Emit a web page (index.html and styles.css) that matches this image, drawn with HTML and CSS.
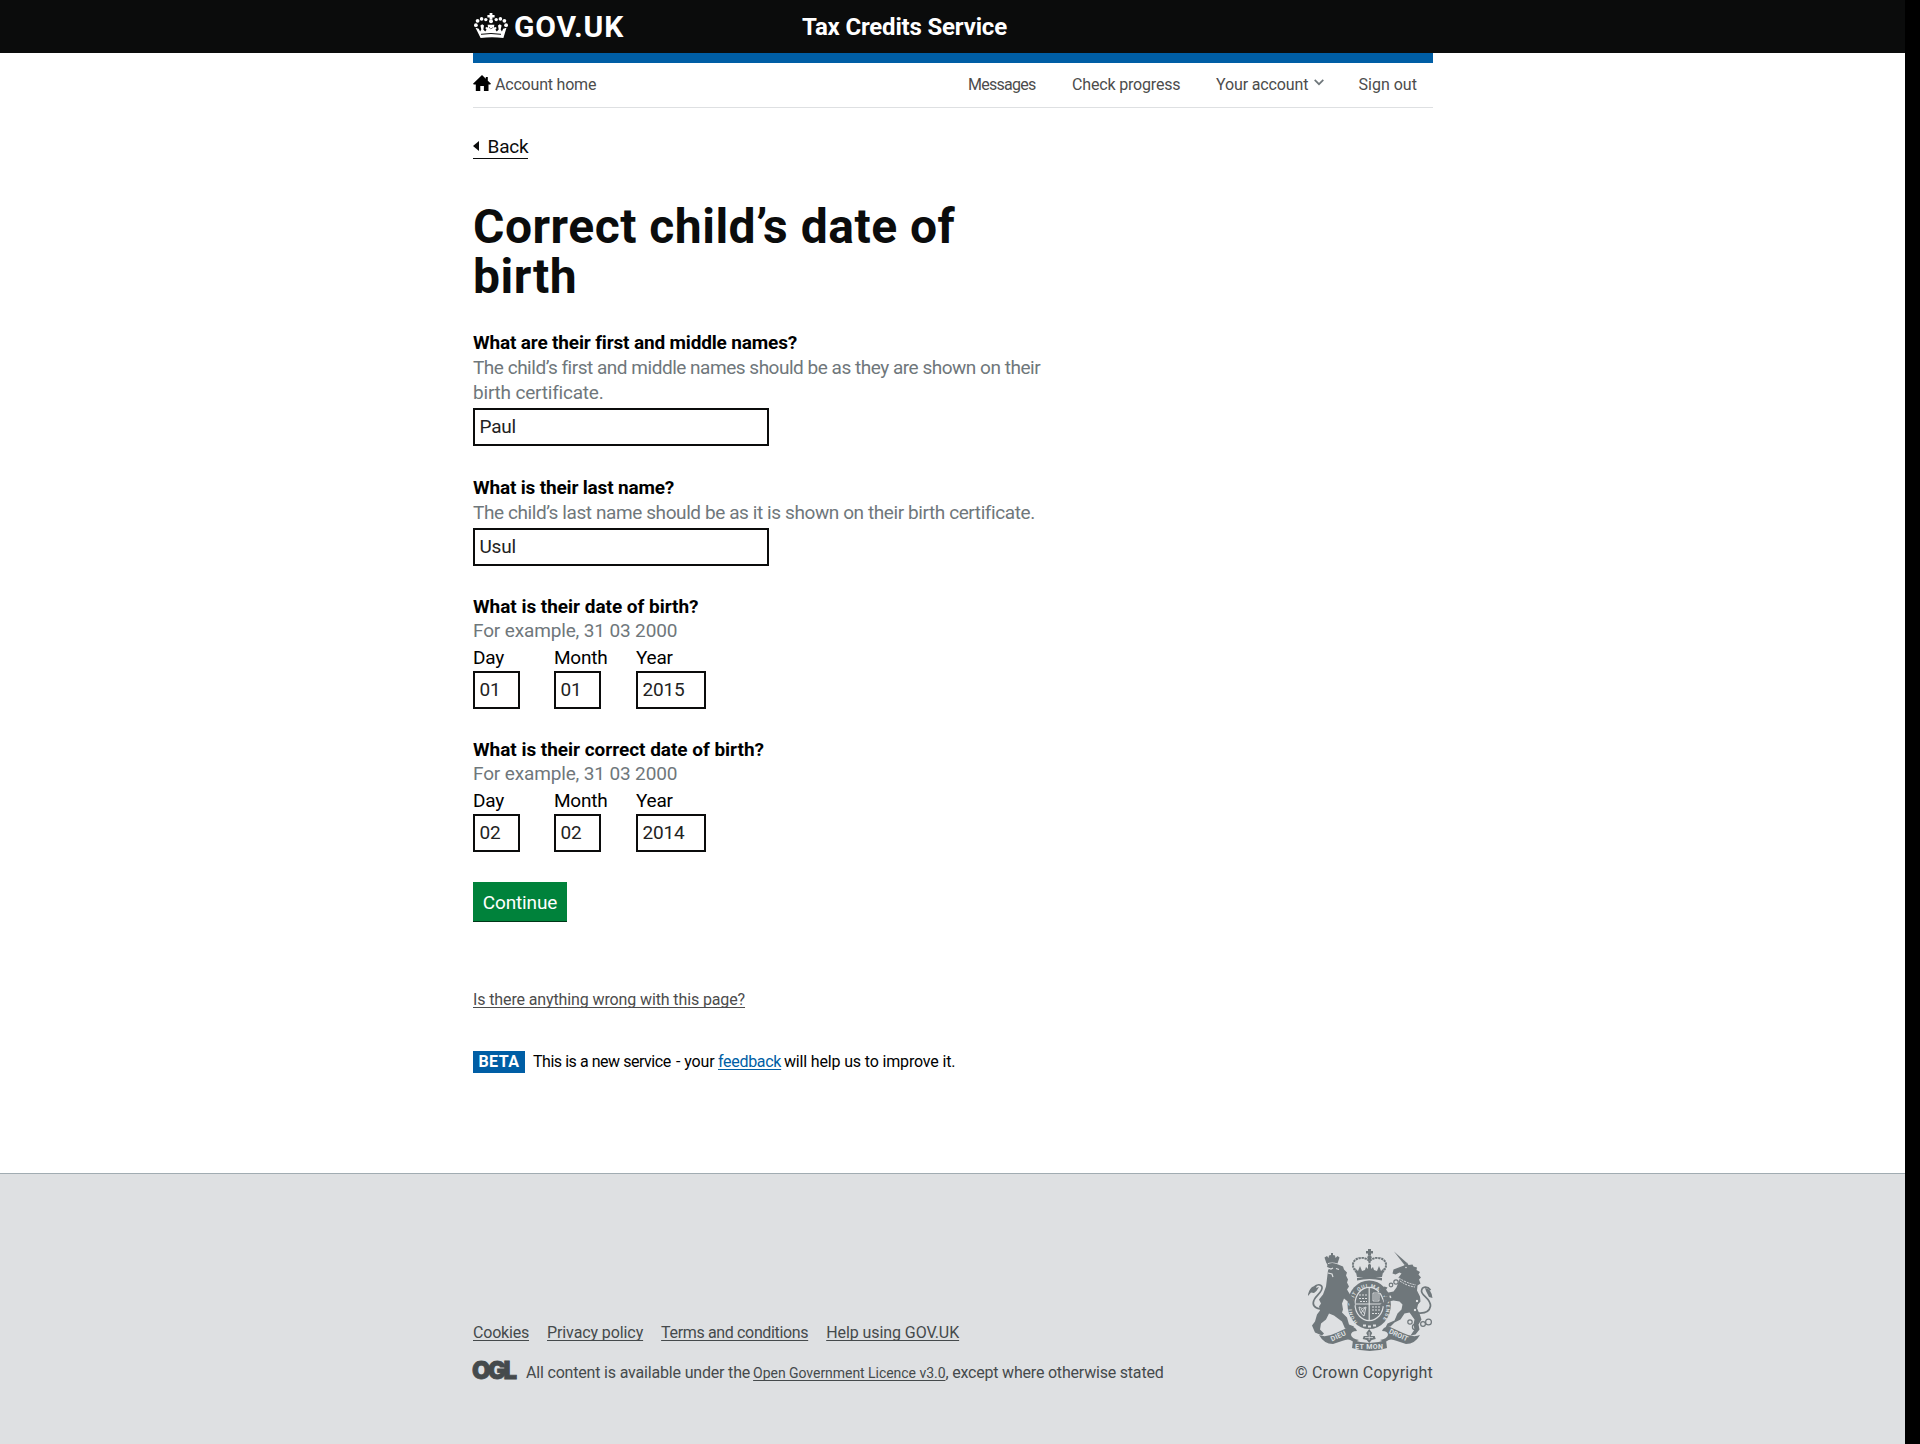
FILE: index.html
```html
<!DOCTYPE html>
<html lang="en">
<head>
<meta charset="utf-8">
<title>Correct child’s date of birth - Tax Credits Service</title>
<link rel="stylesheet" href="styles.css">
</head>
<body>
<header class="header">
  <div class="wrap header-inner">
    <a class="logo">
      <svg class="crown" width="34" height="25" viewBox="0 0 34 25" fill="#fff">
        <path d="M15.600 0h2.800v2h2.200v2.600h-2.200v2h-2.800v-2h-2.200V2h2.200z"/>
        <circle cx="17" cy="8.200" r="2"/>
        <circle cx="11.800" cy="6.600" r="1.700"/><circle cx="22.200" cy="6.600" r="1.700"/>
        <circle cx="7.600" cy="5.900" r="1.800"/><circle cx="26.400" cy="5.900" r="1.800"/>
        <circle cx="3.600" cy="7.800" r="1.900"/><circle cx="30.400" cy="7.800" r="1.900"/>
        <circle cx="1.900" cy="12.200" r="1.900"/><circle cx="32.100" cy="12.200" r="1.900"/>
        <path d="M1.500 14.800l3.300 1 1.300 2.700 1.200-1.900-.9-4 1.800-1.300 1.800 1.300-.7 4 1.900 1.800 1.400-1.700-1.100-1.200.4-1.600 2.200.5-.5-2.700h6.800l-.5 2.700 2.200-.5.4 1.600-1.100 1.200 1.400 1.700 1.900-1.800-.7-4 1.800-1.300 1.800 1.300-.9 4 1.200 1.900 1.300-2.700 3.300-1-3.100 10.200q-11.400-1.500-22.800 0z"/>
        <path d="M7 21.300q10-1.600 20 0M15.300 14.500l1.200 1.200M18.700 14.500l-1.200 1.200" stroke="#0b0c0c" fill="none"/>
      </svg>
      <span class="logo-name">GOV.UK</span>
    </a>
    <span class="service">Tax Credits Service</span>
  </div>
</header>

<div class="wrap">
  <nav class="account">
    <a class="home">
      <svg width="18" height="16" viewBox="0 0 18 16"><path d="M9 0l3.800 3.700V2h2v3.700L18 8.700l-.8.800h-1.700V16h-4.600v-5H7.300v5H2.800V9.500H.8L0 8.700z" fill="#000"/></svg>
      <span>Account home</span>
    </a>
    <a class="messages">Messages</a>
    <a class="progress">Check progress</a>
    <a class="menu"><span>Your account</span><svg width="10" height="7" viewBox="0 0 10 7"><path d="M.7.900L5 5.200 9.300.900" fill="none" stroke="#6f777b" stroke-width="1.700"/></svg></a>
    <a class="signout">Sign out</a>
  </nav>

  <main class="content">
    <a class="back"><svg width="6" height="10" viewBox="0 0 6 10"><path d="M6 0v10L0 5z" fill="#0b0c0c"/></svg><span>Back</span></a>
    <h1>Correct child’s date of<br>birth</h1>

    <form>
      <div class="field">
        <label class="question q-first">What are their first and middle names?</label>
        <p class="hint hint-first">The child’s first and middle names should be as they are shown on their<br><span>birth certificate.</span></p>
        <input class="input" type="text" value="Paul">
      </div>
      <div class="field">
        <label class="question q-last">What is their last name?</label>
        <p class="hint hint-last">The child’s last name should be as it is shown on their birth certificate.</p>
        <input class="input" type="text" value="Usul">
      </div>
      <div class="field date">
        <label class="question">What is their date of birth?</label>
        <p class="hint">For example, 31 03 2000</p>
        <div class="parts">
          <label>Day<input class="input" type="text" value="01"></label>
          <label>Month<input class="input" type="text" value="01"></label>
          <label>Year<input class="input year" type="text" value="2015"></label>
        </div>
      </div>
      <div class="field date">
        <label class="question">What is their correct date of birth?</label>
        <p class="hint">For example, 31 03 2000</p>
        <div class="parts">
          <label>Day<input class="input" type="text" value="02"></label>
          <label>Month<input class="input" type="text" value="02"></label>
          <label>Year<input class="input year" type="text" value="2014"></label>
        </div>
      </div>
      <button class="button" type="button">Continue</button>
    </form>

    <div class="report"><a>Is there anything wrong with this page?</a></div>
    <div class="phase">
      <strong>BETA</strong>
      <span class="phase-intro">This is a new service</span>
      <span class="phase-your">- your</span>
      <a>feedback</a>
      <span class="phase-end">will help us to improve it.</span>
    </div>
  </main>
</div>

<footer class="footer">
  <div class="wrap footer-inner">
    <div class="meta">
      <div class="links">
        <a class="cookies">Cookies</a>
        <a class="privacy">Privacy policy</a>
        <a class="terms">Terms and conditions</a>
        <a class="help">Help using GOV.UK</a>
      </div>
      <div class="licence">
        <svg class="ogl" width="43" height="18" viewBox="0 0 43 18"><text x="-1" y="17.400" textLength="45" lengthAdjust="spacing">OGL</text></svg>
        <span class="lic-a">All content is available under the</span>
        <a>Open Government Licence v3.0</a><span class="lic-b">, except where otherwise stated</span>
      </div>
    </div>
    <div class="copyright">
      <svg class="arms" width="125" height="103" viewBox="0 0 125 103" fill="#6f777b">
        <defs><path id="garter" d="M49.500 73A17.200 19.800 0 1 1 73.500 72"/></defs>
        <!-- royal crown -->
        <path d="M60 0h3v2h2v2.500h-2v2h-3v-2h-2V2h2z"/><circle cx="61.500" cy="8.500" r="2.200"/>
        <path d="M61 12c-4-5-15-4-16 3-.5 4 2 6 4 9M62 12c4-5 15-4 16 3 .5 4-2 6-4 9M61.500 9v13" fill="none" stroke="#6f777b" stroke-width="2" stroke-dasharray="2.300 .7"/>
        <path d="M47 19l3 3 2-5 2 5 3-1 1-3 2 2v-4h3v4l2-2 1 3 3 1 2-5 2 5 3-3-2 9H49z"/>
        <path d="M49 29q12.500-3 25 0v2.500q-12.500-3-25 0z"/>
        <!-- garter and shield -->
        <ellipse cx="61.200" cy="55.800" rx="21.700" ry="24.300"/>
        <ellipse cx="61.200" cy="55" rx="14.800" ry="17.200" fill="#dee0e2"/>
        <ellipse cx="61.200" cy="55" rx="13.600" ry="16"/>
        <path d="M61.200 39v32M47.600 55h27" stroke="#dee0e2" stroke-width="1.200"/>
        <path d="M51 46h8M51 49.500h8M52 52.500h7M64 61h8M64 64.500h7M64 58h9" stroke="#dee0e2" stroke-dasharray="2 1"/>
        <path d="M65 44h6v8h-6zM67 45v6M69 45v6M51 58q3 3 7 0l-2 9q-4-2-5-9M53 60l4 5M57 59l-4 5" fill="none" stroke="#dee0e2" stroke-width=".9"/>
        <text class="motto garter"><textPath href="#garter" textLength="86">HONI SOIT QUI MAL Y PENSE</textPath></text>
        <path d="M55 76.500h3M60 77.500h3M65 76.500h3" stroke="#dee0e2" stroke-width="2"/>
        <!-- lion -->
        <path d="M18.500 14.500l-2-6 2.500-1.500 1.500 2 .5-2.500 2-.5V4h2v2l2 .5.500 2.500 2-2 2 1.500-2 6q-5-2-11 0z"/>
        <path d="M19 15.500q5-3 11 0l5 2 1 3 3 3-1 3 2 4-1 3 2 4-2 3 3 5 3 4 2 6-2 3-3-1-1-4-5-4-2 5 1 6-1 3 5 5 2 7 5 2-2 3-7-1-3-7-8-6-5-2-3 6-5 4-1 6 4 4-2 2-7-3-3-7 3-4 2-7 3-4-1-4 2-3-2-4 4-5 3-8 1-8 1-8 1-2-2-2 1-3-1-3z"/>
        <path d="M20 19l3 1 2-1M20 24l4 1 1 3M28 19.500l3 1" fill="none" stroke="#dee0e2" stroke-width="1.200"/>
        <path d="M12 60Q3 58 6 51c2-5 9-8 8-13-1-3-5-3-8 0" fill="none" stroke="#6f777b" stroke-width="1.700"/>
        <path d="M0 47q0-5 4-9l5-1.500-1 2.500 3-1q-2 4-5 6l-3-.5z"/>
        <!-- unicorn -->
        <path d="M86 2.500L99 14l-2.500 2z"/>
        <path d="M96 16.500l3-3 1.500 2.500 4-.5 1 2 3.500 1-.5 2.500 3.500 2-1.500 2.500 2.500 3-2 2 1.500 4-3 2-.5 5 3 6 .5 5-2.500 3-1 4 2.500 5 2 6-3 5 1 5-4 5-5 1 4-6-1-5 1-5-5-7-5 1-4 6-6 3-4 4-5 1 2-4 7-3 3-7 4-4 1-5-3-3-6-1-5 1-4 5-5-1 2-2-2-5 3 1 1 3 4-3 4-2-1-2-5 1-3-3-4-1 2-3 4-3 3 1-2 3 3 2 5-1 3-4 3-8-1-2 3-4-2-1-4 2-3-1 1-4z"/>
        <path d="M91 29q7 5 17 7M92 32q7 5 15 6" fill="none" stroke="#dee0e2" stroke-width="1" stroke-dasharray="2 1"/>
        <circle cx="98" cy="18.500" r=".8" fill="#dee0e2"/>
        <path d="M110 64q11 1 12.500-7c0-8-9-10-9-15 .5-5 6-5 9-1" fill="none" stroke="#6f777b" stroke-width="1.700"/>
        <path d="M117 39q6 0 7.500 10l-3.500-1-3-6z"/>
        <g fill="none" stroke="#6f777b" stroke-width="1.200"><circle cx="88" cy="33" r="2.200"/><circle cx="83" cy="36" r="1.800"/><circle cx="102" cy="73" r="2.200"/><circle cx="107" cy="78" r="2.600"/><circle cx="115" cy="75" r="2.400"/><circle cx="120.500" cy="73" r="2.900"/><circle cx="109" cy="52" r="1.800" fill="#dee0e2"/><circle cx="107" cy="61" r="1.800" fill="#dee0e2"/></g>
        <!-- scroll -->
        <path d="M11 86q7 3 17-2l13-6q6-1 8 4-6 0-6 4 1 4 8 5-5 3-7 1-3-3-10 0l-9 3q-9 0-14-9z"/>
        <path d="M112 86q-7 3-17-2l-13-6q-6-1-8 4 6 0 6 4-1 4-8 5 5 3 7 1 3-3 10 0l9 3q9 0 14-9z"/>
        <path d="M45 91q16 6 33 0l1 8q-17 6-35 0z"/>
        <path d="M61.200 80l3 4-1.500 3h4l1 3-4 1-2.500 3-2.500-3-4-1 1-3h4l-1.500-3z"/>
        <path d="M61.200 83v8M57 88.500h8" stroke="#dee0e2" stroke-width=".7"/>
        <text class="motto" x="47" y="100" textLength="28">ET MON</text>
        <text class="motto" transform="translate(24 92.500) rotate(-25)" textLength="16">DIEU</text>
        <text class="motto" transform="translate(80.500 84) rotate(25)" textLength="20">DROIT</text>
      </svg>
      <span>© Crown Copyright</span>
    </div>
  </div>
</footer>
</body>
</html>
```
FILE: styles.css
```css
* { box-sizing: border-box; }
html { background: #000; }
body {
  display: flex;
  flex-direction: column;
  width: 1905px;
  height: 1444px;
  margin: 0;
  background: #fff;
  color: #0b0c0c;
  font: 16px/20px Roboto, "Liberation Sans", sans-serif;
}
.wrap { width: 960px; margin: 0 auto 0 473px; }
p, h1 { margin: 0; }

.header { height: 53px; background: #0b0c0c; color: #fff; }
.header-inner { display: flex; }
.logo { display: flex; width: 329px; padding: 13px 0 0 1px; }
.crown { flex: none; margin-left: -.5px; }
.logo-name { margin: -4px 0 0 6.500px; font-size: 30px; line-height: 35px; font-weight: 700; letter-spacing: .9px; }
.service { padding-top: 13px; font-size: 24px; line-height: 29px; font-weight: 700; letter-spacing: -.18px; }

.account {
  display: flex;
  height: 55px;
  border-top: 10px solid #005ea5;
  border-bottom: 1px solid #dee0e2;
  padding-top: 12px;
  color: #4c4c4c;
}
.home { display: flex; width: 495px; letter-spacing: -.2px; }
.home svg { margin-top: -.5px; }
.home span { margin-left: 4px; }
.messages { width: 104px; letter-spacing: -.72px; }
.progress { width: 144px; letter-spacing: -.17px; }
.menu { width: 142.500px; letter-spacing: -.14px; }
.menu svg { margin: 0 0 4px 6px; }

.content { display: flex; flex-direction: column; align-items: flex-start; }
.back {
  display: flex;
  align-items: center;
  height: 24px;
  margin: 27px 0 43px;
  border-bottom: 1px solid #0b0c0c;
  font-size: 19px;
  line-height: 25px;
  letter-spacing: -.2px;
}
.back svg { margin-bottom: 1px; }
.back span { margin-left: 8.500px; }
h1 { font-size: 48px; line-height: 50px; font-weight: 700; letter-spacing: .5px; margin-bottom: 28px; padding-top: 0; }

.field { margin-bottom: 29px; font-size: 19px; line-height: 25px; }
.question { display: block; font-weight: 700; letter-spacing: -.03px; color: #000; }
.q-first { letter-spacing: -.16px; }
.q-last { letter-spacing: -.17px; }
.hint { color: #6f777b; letter-spacing: -.14px; }
.hint-first { letter-spacing: -.48px; }
.hint-first span { letter-spacing: -.2px; }
.hint-last { letter-spacing: -.41px; }
.input {
  display: block;
  width: 296px;
  height: 38px;
  margin: 3px 0 0;
  padding: 3px 5px 5px 4.500px;
  border: 2px solid #0b0c0c;
  border-radius: 0;
  background: #fff;
  color: #222;
  font: 19px/25px Roboto, "Liberation Sans", sans-serif;
  letter-spacing: -.2px;
}
.date .question { padding-top: 1px; line-height: 22px; }
.parts { display: grid; grid-template-columns: 81px 82px 70px; margin-top: 2px; color: #000; letter-spacing: -.25px; }
.parts .input { width: 47px; margin-top: 1px; }
.parts .year { width: 70px; }
.button {
  display: block;
  width: 94px;
  height: 39px;
  margin-top: 30px;
  padding: 1px 0 0;
  border: 0;
  background: #00823b;
  box-shadow: 0 1px 0 #003618;
  color: #fff;
  font: 19px/25px Roboto, "Liberation Sans", sans-serif;
  letter-spacing: -.15px;
}
.report a, .phase a, .links a, .licence a { text-decoration: underline 1px; text-decoration-skip-ink: none; text-underline-offset: 2px; }
.report { margin-top: 69px; color: #4c4c4c; letter-spacing: -.12px; }
.phase { display: flex; margin-top: 41px; line-height: 22px; color: #000; }
.phase strong { width: 52px; height: 22px; background: #005ea5; color: #fff; text-align: center; letter-spacing: .5px; line-height: 21px; }
.phase-intro { width: 143px; margin-left: 8px; letter-spacing: -.46px; }
.phase-your { width: 42px; letter-spacing: -.1px; }
.phase a { width: 63px; color: #005ea5; letter-spacing: -.3px; }
.phase-end { margin-left: 3px; letter-spacing: -.16px; }

.footer { margin-top: auto; height: 271px; border-top: 1px solid #a1acb2; background: #dee0e2; color: #454a4c; }
.footer-inner { display: flex; justify-content: space-between; }
.meta { padding-top: 149px; }
.links { display: flex; gap: 18px; }
.cookies { letter-spacing: -.2px; }
.privacy { letter-spacing: -.1px; }
.terms { letter-spacing: -.35px; }
.help { letter-spacing: -.08px; }
.licence { display: flex; margin-top: 20px; }
.ogl { margin: -1px 10px 0 0; overflow: visible; }
.ogl text { font: 900 24px Inter, sans-serif; fill: #454a4c; stroke: #454a4c; stroke-width: .8px; }
.lic-a { letter-spacing: -.18px; margin-right: 3px; }
.licence a { font-size: 14px; line-height: 21px; letter-spacing: -.04px; }
.lic-b { letter-spacing: -.2px; }
.copyright { display: flex; flex-direction: column; align-items: flex-end; padding-top: 75px; letter-spacing: .2px; }
.copyright span { margin-top: 11px; }
.arms { overflow: visible; }
.motto { font: 700 7px Roboto, sans-serif; fill: #dee0e2; letter-spacing: 0; }
.garter { font-size: 5px; }
```
